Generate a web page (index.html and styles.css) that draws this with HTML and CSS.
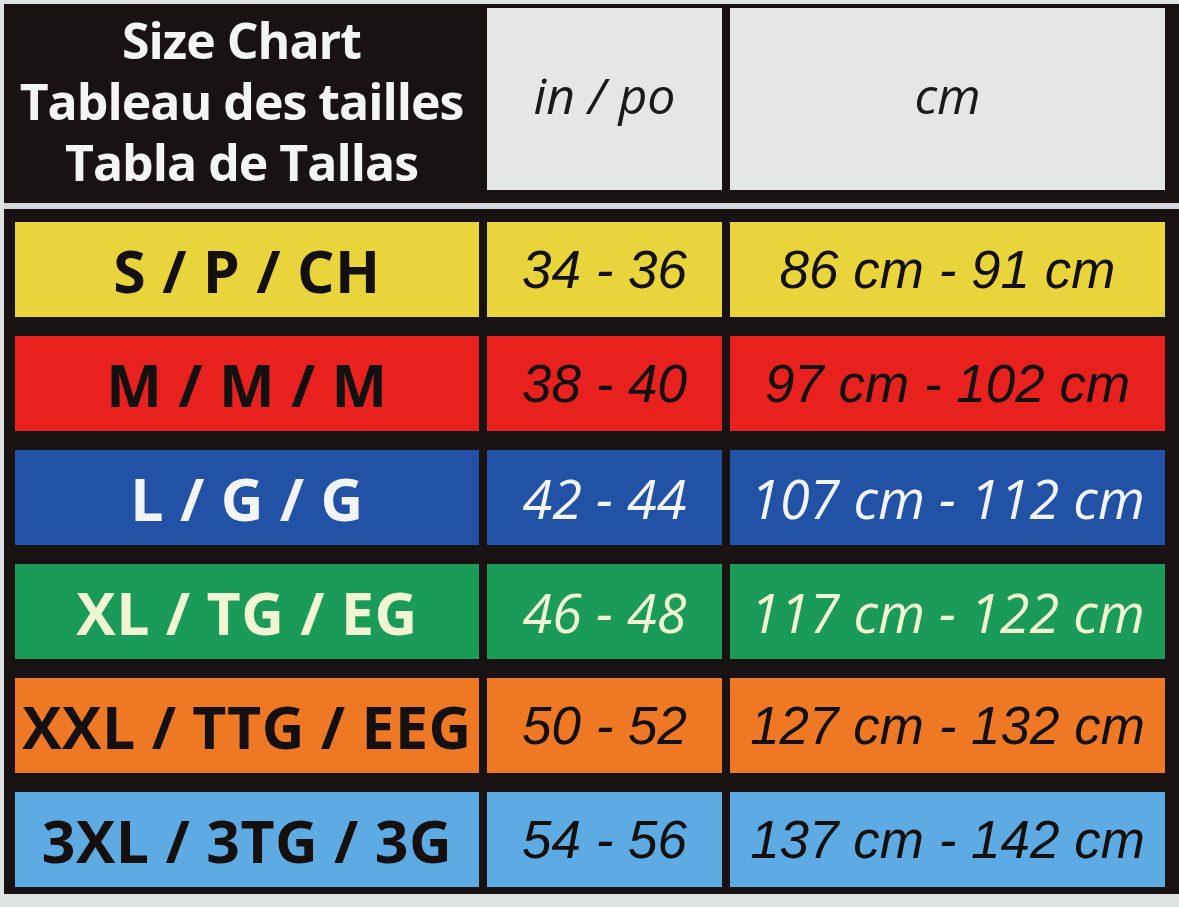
FILE: index.html
```html
<!DOCTYPE html>
<html>
<head>
    <title>Size Chart</title>
    <link rel="stylesheet" href="styles.css">
</head>
<body>
    <div class="chart">
        <div class="grid header">
            <div class="title">
                <div>Size Chart</div>
                <div>Tableau des tailles</div>
                <div>Tabla de Tallas</div>
            </div>
            <div class="unit">in / po</div>
            <div class="unit">cm</div>
        </div>

        <div class="divider"></div>

        <div class="rows">
            <div class="grid row yellow">
                <div class="size">S / P / CH</div>
                <div class="val">34 - 36</div>
                <div class="val">86 cm - 91 cm</div>
            </div>
            <div class="grid row red">
                <div class="size">M / M / M</div>
                <div class="val">38 - 40</div>
                <div class="val">97 cm - 102 cm</div>
            </div>
            <div class="grid row blue">
                <div class="size">L / G / G</div>
                <div class="val">42 - 44</div>
                <div class="val">107 cm - 112 cm</div>
            </div>
            <div class="grid row green">
                <div class="size">XL / TG / EG</div>
                <div class="val">46 - 48</div>
                <div class="val">117 cm - 122 cm</div>
            </div>
            <div class="grid row orange">
                <div class="size">XXL / TTG / EEG</div>
                <div class="val">50 - 52</div>
                <div class="val">127 cm - 132 cm</div>
            </div>
            <div class="grid row sky">
                <div class="size">3XL / 3TG / 3G</div>
                <div class="val">54 - 56</div>
                <div class="val">137 cm - 142 cm</div>
            </div>
        </div>
    </div>
</body>
</html>
```

FILE: styles.css
```css
body {
    margin: 0;
    background: #dfe2e3;
    font-family: "Open Sans", Arial, sans-serif;
}
.chart {
    background: #181312;
    margin: 4px 0 0 4px;
    height: 890px;
    padding-top: 4px;
    box-sizing: border-box;
}
.grid {
    display: grid;
    grid-template-columns: 464px 235px 435px;
    column-gap: 8px;
    padding-left: 11px;
}
.header {
    grid-template-rows: 182px;
}
.title {
    color: #f4f4f2;
    font-weight: 700;
    font-size: 50px;
    line-height: 61px;
    letter-spacing: -1px;
    text-align: center;
    margin: 2px 0 0 -11px;
    white-space: nowrap;
}
.unit {
    background: #e5e7e7;
    color: #1a1a1a;
    font-style: italic;
    font-size: 50px;
    display: flex;
    align-items: center;
    justify-content: center;
    padding-bottom: 8px;
}
.divider {
    height: 6px;
    background: #d3d7da;
    margin-top: 13px;
}
.rows {
    display: flex;
    flex-direction: column;
    gap: 19px;
    margin-top: 13px;
}
.row { height: 95px; }
.row > div {
    display: flex;
    align-items: center;
    justify-content: center;
    color: #141010;
}
.size {
    font-weight: 700;
    font-size: 59px;
    letter-spacing: 0.5px;
    white-space: nowrap;
}
.val {
    font-family: "Liberation Sans", Arial, sans-serif;
    font-style: italic;
    font-size: 53px;
}
.yellow > div { background: #e9d43b; }
.red > div { background: #e8211f; }
.blue > div { background: #2152a6; color: #f2f4f8 !important; }
.green > div { background: #1a9b57; color: #f1f6d2 !important; }
.orange > div { background: #ee7823; }
.sky > div { background: #5eaae2; }
.blue .val, .green .val {
    font-family: "Open Sans", Arial, sans-serif;
    font-size: 54px;
}
```
